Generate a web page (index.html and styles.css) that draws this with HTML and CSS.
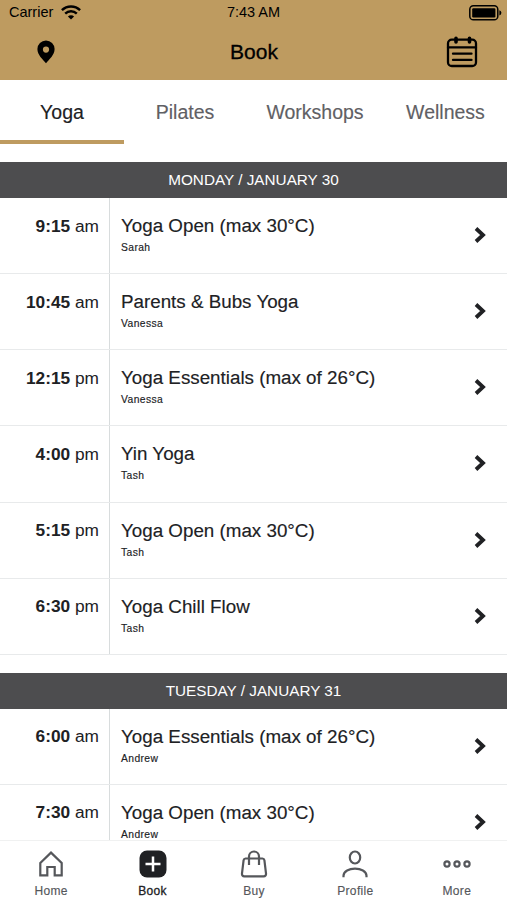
FILE: index.html
```html
<!DOCTYPE html>
<html lang="en">
<head>
<meta charset="utf-8">
<title>Book</title>
<link rel="stylesheet" href="styles.css">
</head>
<body>
<div class="app">
  <header class="top">
    <div class="status">
      <div class="carrier"><span>Carrier</span>
        <svg width="20" height="15" viewBox="0 0 20 15" fill="none" stroke="#000" stroke-width="2.4"><path d="M.9 5.2a13 13 0 0 1 18.2 0M4.2 8.6a8.3 8.3 0 0 1 11.600 0"/><path d="M10 14.400 6.900 11.500a4.400 4.400 0 0 1 6.200 0z" fill="#000" stroke="none"/></svg>
      </div>
      <span class="clock">7:43 AM</span>
      <svg class="battery" width="33" height="16" viewBox="0 0 33 16"><rect x=".8" y=".8" width="28" height="14" rx="3.600" fill="none" stroke="#000" stroke-width="1.500"/><rect x="3.200" y="3.200" width="23.200" height="9.200" rx="1.200"/><path d="M30.400 5.200q2 .5 2 2.600t-2 2.600z"/></svg>
    </div>
    <div class="titlebar">
      <svg class="pin" width="18" height="24" viewBox="0 0 18 24"><path fill-rule="evenodd" d="M9 .5a8.600 8.600 0 0 0-8.600 8.600C.4 15 5.800 19.500 9 23.300c3.200-3.800 8.600-8.300 8.600-14.200A8.600 8.600 0 0 0 9 .5zm0 6a3.100 3.100 0 1 1 0 6.200 3.100 3.100 0 0 1 0-6.200z"/></svg>
      <h1>Book</h1>
      <svg class="calendar" width="32" height="32" viewBox="0 0 32 32" fill="none" stroke="#000" stroke-width="2.300" stroke-linecap="round"><rect x="2" y="3.700" width="28" height="26.300" rx="3.800"/><path d="M2 11.300h28M7 17.700h18.500M7 23.900h18.500"/><path d="M10 2.300v3.700M23.500 2.300v3.700" stroke-width="3.600"/></svg>
    </div>
  </header>
  <nav class="tabs"><a class="active">Yoga</a><a>Pilates</a><a>Workshops</a><a>Wellness</a></nav>
  <main class="schedule">
    <section>
      <h2>MONDAY / JANUARY 30</h2>
      <ul>
        <li><div class="time"><b>9:15</b> am</div><div class="info"><h3>Yoga Open (max 30°C)</h3><p>Sarah</p></div><svg class="chevron" viewBox="0 0 12 16"><path d="m2 1.500 7 6.500-7 6.500"/></svg></li>
        <li><div class="time"><b>10:45</b> am</div><div class="info"><h3>Parents &amp; Bubs Yoga</h3><p>Vanessa</p></div><svg class="chevron" viewBox="0 0 12 16"><path d="m2 1.500 7 6.500-7 6.500"/></svg></li>
        <li><div class="time"><b>12:15</b> pm</div><div class="info"><h3>Yoga Essentials (max of 26°C)</h3><p>Vanessa</p></div><svg class="chevron" viewBox="0 0 12 16"><path d="m2 1.500 7 6.500-7 6.500"/></svg></li>
        <li><div class="time"><b>4:00</b> pm</div><div class="info"><h3>Yin Yoga</h3><p>Tash</p></div><svg class="chevron" viewBox="0 0 12 16"><path d="m2 1.500 7 6.500-7 6.500"/></svg></li>
        <li><div class="time"><b>5:15</b> pm</div><div class="info"><h3>Yoga Open (max 30°C)</h3><p>Tash</p></div><svg class="chevron" viewBox="0 0 12 16"><path d="m2 1.500 7 6.500-7 6.500"/></svg></li>
        <li><div class="time"><b>6:30</b> pm</div><div class="info"><h3>Yoga Chill Flow</h3><p>Tash</p></div><svg class="chevron" viewBox="0 0 12 16"><path d="m2 1.500 7 6.500-7 6.500"/></svg></li>
      </ul>
    </section>
    <section>
      <h2>TUESDAY / JANUARY 31</h2>
      <ul>
        <li><div class="time"><b>6:00</b> am</div><div class="info"><h3>Yoga Essentials (max of 26°C)</h3><p>Andrew</p></div><svg class="chevron" viewBox="0 0 12 16"><path d="m2 1.500 7 6.500-7 6.500"/></svg></li>
        <li><div class="time"><b>7:30</b> am</div><div class="info"><h3>Yoga Open (max 30°C)</h3><p>Andrew</p></div><svg class="chevron" viewBox="0 0 12 16"><path d="m2 1.500 7 6.500-7 6.500"/></svg></li>
      </ul>
    </section>
  </main>
  <nav class="bottom">
    <a><svg viewBox="0 0 28 28"><path d="M3.300 13 14 2.600l10.700 10.400v12.300h-7v-8.300h-7.400v8.300h-7z"/></svg><span>Home</span></a>
    <a class="active"><svg viewBox="0 0 28 28"><rect x=".5" y=".5" width="27" height="27" rx="7.500" fill="#202124" stroke="none"/><path d="M14 6.500v15M6.500 14h15" stroke="#fff" stroke-width="2.500"/></svg><span>Book</span></a>
    <a><svg viewBox="0 0 28 28"><path d="M5.500 8.500h17c1.200 0 1.700.6 1.900 1.700L26 23.400c.2 1.700-.7 2.900-2.300 2.900H4.300C2.700 26.300 1.800 25.100 2 23.400l1.600-13.200c.2-1.100.7-1.700 1.900-1.700z"/><path d="M9 15V6.500a5 5 0 0 1 10 0V15"/></svg><span>Buy</span></a>
    <a><svg viewBox="0 0 28 28"><ellipse cx="14" cy="7.500" rx="5.200" ry="6"/><path d="M2.500 27.200v-1.400c0-9.500 23-9.500 23 0v1.400"/></svg><span>Profile</span></a>
    <a><svg viewBox="0 0 28 28"><circle cx="4" cy="14" r="2.600"/><circle cx="14" cy="14" r="2.600"/><circle cx="24" cy="14" r="2.600"/></svg><span>More</span></a>
  </nav>
</div>
</body>
</html>
```
FILE: styles.css
```css
* { box-sizing: border-box; }
body { margin: 0; background: #fff; color: #202124; font-family: "Liberation Sans", Arial, sans-serif; }
h1, h2, h3, p, ul { margin: 0; padding: 0; font-weight: 400; list-style: none; }
svg { display: block; flex: none; }
.app { height: 900px; display: flex; flex-direction: column; overflow: hidden; white-space: nowrap; }
.top { height: 80px; flex: none; background: #be9b60; color: #000; }
.status { height: 25px; display: grid; grid-template-columns: 1fr auto 1fr; align-items: center; padding: 0 5px 0 9px; font-size: 14.500px; }
.carrier { display: flex; gap: 8px; align-items: center; }
.carrier span { line-height: 25px; }
.clock { padding-right: 4px; line-height: 22px; margin-top: -2px; }
.battery { justify-self: end; }
.titlebar { height: 55px; display: grid; grid-template-columns: 1fr auto 1fr; align-items: center; padding: 0 29px 2px 37px; }
.titlebar h1 { font-size: 21px; line-height: 26px; padding-right: 7px; -webkit-text-stroke: .3px #000; }
.calendar { justify-self: end; }
.tabs { height: 64px; flex: none; display: grid; grid-template-columns: 124px 122px 138px 123px; }
.tabs a { height: 64px; text-align: center; font-size: 19.500px; line-height: 65px; color: #5f6064; border-bottom: 4px solid transparent; overflow: hidden; -webkit-text-stroke: .15px; }
.tabs a.active { color: #202124; border-bottom-color: #be9b60; }
.schedule { flex: 1; min-height: 0; overflow: hidden; padding-top: 18px; }
section { margin-bottom: 18px; }
h2 { height: 36px; background: #4d4d4f; color: #fff; text-align: center; font-size: 15.300px; line-height: 36px; }
li { height: 76.150px; display: grid; grid-template-columns: 110px 1fr 35px; border-bottom: 1px solid #e8eaeb; }
.time { border-right: 1px solid #d8dcdd; padding: 16.500px 10px 0 0; text-align: right; font-size: 17.300px; line-height: 22px; }
.info { padding: 17px 0 0 11px; }
h3 { font-size: 18.800px; line-height: 22px; -webkit-text-stroke: .15px; }
.info p { font-size: 10.300px; letter-spacing: .4px; line-height: 12px; margin-top: 5px; -webkit-text-stroke: .15px #202124; }
.chevron { width: 12px; height: 16px; margin: 29px 0 0 2px; fill: none; stroke: #202124; stroke-width: 3.800; }
.bottom { height: 60px; flex: none; border-top: 1px solid #f0f1f1; display: grid; grid-template-columns: repeat(5, 1fr); background: #fff; }
.bottom a { display: flex; flex-direction: column; align-items: center; padding: 9px 0 0 1px; font-size: 12px; letter-spacing: .35px; color: #55575b; -webkit-text-stroke: .15px #55575b; }
.bottom svg { width: 28px; height: 28px; fill: none; stroke: #55575b; stroke-width: 2.200; }
.bottom span { line-height: 14px; margin-top: 6px; }
.bottom a.active { color: #202124; -webkit-text-stroke: .3px #202124; }
```
